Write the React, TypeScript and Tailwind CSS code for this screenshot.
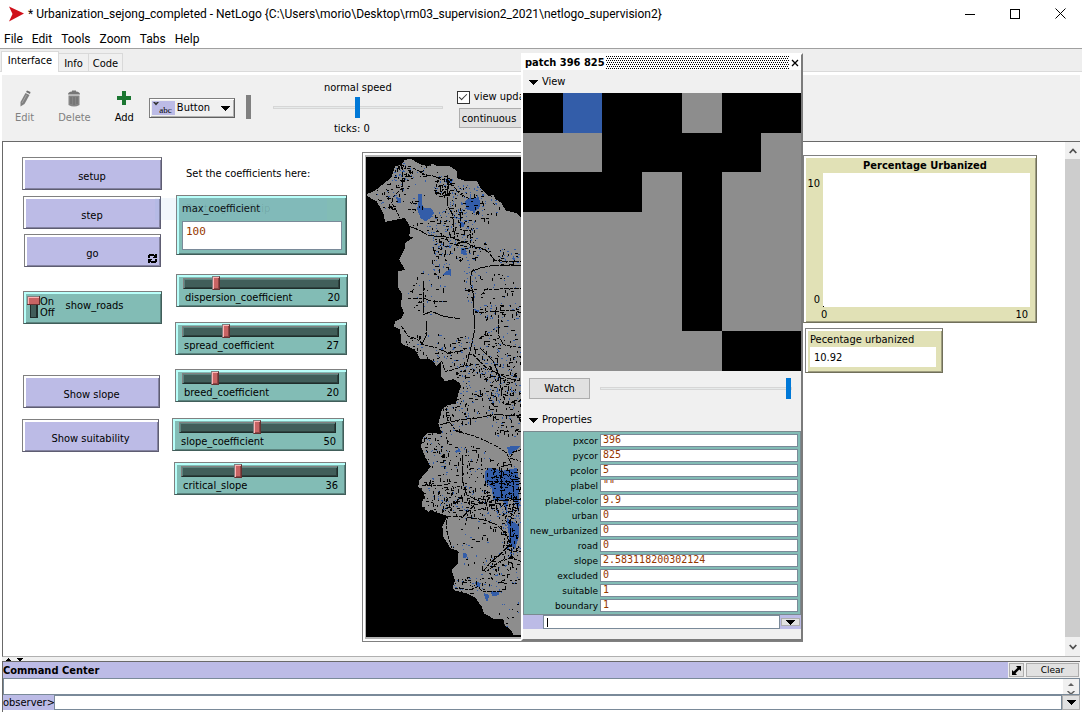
import React from "react";

const UI = "font-['DejaVu_Sans_Condensed','DejaVu_Sans',sans-serif]";

/* ---------- Bevelled widget frames ---------- */
const LILAC =
  "border border-t-[#808080] border-l-[#808080] border-r-[#5e5d72] border-b-[#5e5d72] bg-[#bcbbe6] shadow-[inset_2px_2px_0_#ffffff,inset_-1px_-1px_0_#8483a1]";
const TEAL =
  "border border-t-[#808080] border-l-[#808080] border-r-[#415e5a] border-b-[#415e5a] bg-[#82bcb5] shadow-[inset_2px_2px_0_#b9fffa,inset_-1px_-1px_0_#5b847f]";
const SAND =
  "border border-t-[#808080] border-l-[#808080] border-r-[#706f5a] border-b-[#706f5a] bg-[#e1e1b6] shadow-[inset_2px_2px_0_#ffffff,inset_-1px_-1px_0_#9e9d7f]";

function CanvasButton({ label, place, forever }: { label: string; place: string; forever?: boolean }) {
  return (
    <button className={`absolute h-[33px] pt-[7px] text-center text-[11px] ${LILAC} ${place}`}>
      {label}
      {forever && (
        <svg className="absolute right-[3px] bottom-[3px]" width="9" height="9" viewBox="0 0 9 9" shapeRendering="crispEdges" aria-hidden="true">
          <path d="M0 4V1h1V0h5v1h1V0h2v4H5V3h1V2H2v2zM9 5v3H8v1H3V8H2v1H0V5h4v1H3v1h4V5z" fill="#000" />
        </svg>
      )}
    </button>
  );
}

function CoefficientSlider({ name, value, place }: { name: string; value: number; place: string }) {
  return (
    <div className={`absolute h-[33px] w-[172px] pr-[7px] pl-[6px] ${TEAL} ${place}`}>
      <input
        id={name}
        type="range"
        min={1}
        max={100}
        defaultValue={value}
        className="mt-px block h-[14px] w-full appearance-none bg-transparent [&::-webkit-slider-runnable-track]:h-[11px] [&::-webkit-slider-runnable-track]:border [&::-webkit-slider-runnable-track]:border-t-[#808080] [&::-webkit-slider-runnable-track]:border-l-[#808080] [&::-webkit-slider-runnable-track]:border-r-[#1f2d2b] [&::-webkit-slider-runnable-track]:border-b-[#1f2d2b] [&::-webkit-slider-runnable-track]:bg-[#415e5a] [&::-webkit-slider-runnable-track]:shadow-[inset_1px_1px_0_#5b847f,inset_-1px_-1px_0_#2d413e] [&::-webkit-slider-thumb]:-mt-[3px] [&::-webkit-slider-thumb]:h-[14px] [&::-webkit-slider-thumb]:w-[8px] [&::-webkit-slider-thumb]:appearance-none [&::-webkit-slider-thumb]:border [&::-webkit-slider-thumb]:border-t-[#808080] [&::-webkit-slider-thumb]:border-l-[#808080] [&::-webkit-slider-thumb]:border-r-[#643232] [&::-webkit-slider-thumb]:border-b-[#643232] [&::-webkit-slider-thumb]:bg-[#c86464] [&::-webkit-slider-thumb]:shadow-[inset_1px_1px_0_#ffb4b4,inset_-1px_-1px_0_#8c4646]"
      />
      <div className="flex justify-between pt-px pl-0.5 text-[11px] leading-[14px]">
        <label htmlFor={name}>{name}</label>
        <span>{value}</span>
      </div>
    </div>
  );
}

/* ---------- World view ---------- */
const LAND =
  "22,138 45,128 80,100 93,90 105,55 125,50 135,35 155,33 165,40 185,50 205,55 215,47 235,55 270,55 290,68 290,90 320,100 352,100 362,120 380,140 400,140 405,152 425,165 437,188 470,195 483,208 483,1461 460,1461 455,1448 433,1431 430,1414 400,1412 372,1396 365,1376 345,1348 320,1336 285,1328 278,1318 285,1296 275,1266 293,1246 293,1208 272,1201 250,1166 247,1136 262,1104 215,1088 205,1091 185,1076 185,1061 195,1048 190,1031 175,1016 178,996 200,971 212,956 195,926 183,896 188,871 205,854 245,858 235,826 245,786 262,771 287,768 295,736 303,715 300,705 280,693 255,700 243,685 243,640 230,655 215,635 180,632 165,605 125,588 120,545 102,535 105,520 125,510 132,495 122,470 127,440 113,415 115,370 135,365 118,335 135,300 135,285 160,268 148,265 150,235 135,210 110,215 75,222 70,195 50,160 22,145";

const ROADS = [
  "145,234 175,245 205,262 240,266 275,268 290,275 320,285 345,297 375,305 390,318 405,338 483,342",
  "160,60 175,68 195,80 225,85 245,95 265,98 285,120 300,138 325,150",
  "128,58 128,120 100,145 95,165 110,190 120,210",
  "262,80 262,170 278,200 283,262",
  "300,180 300,245 330,248 330,300",
  "250,262 270,285 290,292 320,295",
  "483,352 400,352 360,360 335,370 330,400 340,440 342,500 345,540 335,590 320,650",
  "365,440 375,425 483,420",
  "345,495 400,490 483,485",
  "190,400 190,500 215,490 250,505 300,512",
  "145,452 190,450 215,460 260,460",
  "125,535 145,565 170,572 190,590 230,600 265,615 300,610 320,600",
  "200,520 200,560 185,590",
  "245,640 255,670 280,665 305,655 340,650",
  "415,500 415,560 430,590 483,600",
  "360,600 400,640 420,690 425,740",
  "340,620 380,660 440,690 483,700",
  "258,780 262,815 290,850 330,860 370,875 410,895 440,915 450,940 455,960",
  "240,830 300,815 350,810 400,800 483,803",
  "483,905 460,912 450,930 483,940",
  "265,1104 310,1104 345,1070 400,1058 483,1055",
  "308,920 308,1000 320,1040 360,1060",
  "188,1013 250,1011",
  "262,1104 258,1140 275,1200",
  "320,1108 370,1115 410,1130 440,1160 450,1190 420,1220 390,1245 370,1270",
  "285,1320 330,1325 355,1315 365,1330 430,1332",
  "380,1270 420,1240 455,1230 483,1240",
  "425,960 425,1050",
  "440,980 460,1000 460,1070 450,1130 455,1220",
  "390,1000 483,1000",
];

const LAKES = [
  "175,138 185,138 188,178 215,182 222,195 210,212 195,220 182,210 172,185",
  "108,146 125,152 122,165 112,165",
  "325,150 358,148 360,175 345,192 320,185 315,165",
  "302,300 318,302 318,322 303,318",
  "262,368 273,362 272,383 250,380",
  "255,92 280,92 275,106 260,106",
  "300,220 315,225 312,238 300,235",
  "343,484 357,486 355,495 345,495",
  "440,896 483,894 460,912 448,922",
  "375,970 390,960 430,968 470,960 478,1000 478,1100 465,1060 445,1050 440,1100 430,1060 400,1055 395,1020 375,1000",
  "440,1110 475,1130 478,1160 465,1205 450,1190 445,1150",
  "370,1335 386,1340 385,1360 378,1358",
  "393,1330 418,1332 415,1342 396,1344",
  "308,1215 322,1217 320,1228 310,1230",
  "345,1302 362,1304 360,1318 348,1316",
  "285,908 300,904 302,912 288,914",
];

/* cx, cy, rx, ry, strokes of road, urban cells */
const CLUSTERS = [
  [125, 85, 30, 45, 36, 26],
  [90, 145, 45, 40, 32, 12],
  [180, 75, 60, 30, 24, 12],
  [250, 115, 30, 35, 60, 16],
  [320, 165, 55, 60, 36, 80],
  [275, 240, 75, 60, 80, 70],
  [380, 180, 50, 40, 18, 12],
  [165, 175, 30, 70, 16, 6],
  [300, 300, 90, 40, 48, 45],
  [440, 325, 50, 25, 20, 22],
  [240, 340, 30, 50, 20, 22],
  [330, 400, 20, 70, 16, 22],
  [200, 430, 55, 70, 26, 14],
  [400, 420, 70, 50, 22, 10],
  [420, 490, 75, 30, 36, 28],
  [200, 600, 75, 50, 40, 22],
  [310, 620, 50, 60, 38, 30],
  [420, 620, 80, 90, 110, 55],
  [380, 700, 100, 60, 80, 60],
  [280, 810, 50, 60, 46, 18],
  [440, 790, 60, 80, 90, 40],
  [350, 770, 60, 60, 26, 18],
  [225, 900, 45, 60, 50, 20],
  [320, 950, 80, 60, 60, 24],
  [235, 1040, 60, 60, 80, 22],
  [320, 1060, 80, 50, 100, 30],
  [430, 1020, 60, 80, 190, 60],
  [455, 1140, 35, 90, 95, 70],
  [370, 1130, 80, 60, 26, 18],
  [310, 1220, 40, 40, 12, 10],
  [420, 1270, 60, 60, 65, 28],
  [330, 1310, 50, 25, 26, 14],
  [440, 1380, 40, 60, 10, 6],
];

function scatter(which: 4 | 5, seed: number) {
  let s = seed;
  const next = () => {
    s = (s * 1664525 + 1013904223) % 4294967296;
    return s / 4294967296;
  };
  let d = "";
  for (const c of CLUSTERS) {
    for (let i = 0; i < c[which]; i++) {
      const angle = next() * Math.PI * 2;
      const r = Math.sqrt(next());
      const x = Math.round((c[0] + Math.cos(angle) * r * c[2]) / 3) * 3;
      const y = Math.round((c[1] + Math.sin(angle) * r * c[3]) / 3) * 3;
      const len = which === 4 ? 3 * (1 + Math.floor(next() * 3.2)) : 3 * (1 + Math.floor(next() * 1.6));
      const flat = next() > 0.5;
      d += `M${x} ${y}h${flat ? len : 3}v${flat ? 3 : len}h${flat ? -len : -3}z`;
    }
  }
  return d;
}

const ROAD_CELLS = scatter(4, 20);
const URBAN_CELLS = scatter(5, 77);

function WorldMap() {
  return (
    <svg width="155" height="480" viewBox="18 27 465 1440" shapeRendering="crispEdges" role="img" aria-label="World view" className="block">
      <rect x="18" y="27" width="465" height="1440" fill="#000" />
      <clipPath id="land">
        <polygon points={LAND} />
      </clipPath>
      <polygon points={LAND} fill="#8d8d8d" />
      <g clipPath="url(#land)">
        {LAKES.map((p) => (
          <polygon key={p} points={p} fill="#335da9" />
        ))}
        <path d={URBAN_CELLS} fill="#335da9" />
        <path d={ROAD_CELLS} fill="#000" />
        {ROADS.map((p, i) => (
          <polyline key={p} points={p} fill="none" stroke="#000" strokeWidth="3" strokeDasharray={i % 3 === 0 ? "30 3" : "9 4 15 3"} />
        ))}
      </g>
    </svg>
  );
}

const PATCHES = ["KBKKGKK", "GGKKKKG", "KKKGKGG", "GGGGKGG", "GGGGKGG", "GGGGKGG", "GGGGGKK"];
const PATCH_FILL: Record<string, string> = { K: "#000000", B: "#335da9", G: "#8d8d8d" };

function PatchView() {
  return (
    <svg viewBox="0 0 7 7" className="block aspect-square w-full" shapeRendering="crispEdges" role="img" aria-label="Patch view">
      {PATCHES.map((row, y) =>
        row.split("").map((c, x) => <rect key={`${x}-${y}`} x={x} y={y} width="1" height="1" fill={PATCH_FILL[c]} />)
      )}
    </svg>
  );
}

/* ---------- Patch inspector ---------- */
const PROPERTIES = [
  ["pxcor", "396"],
  ["pycor", "825"],
  ["pcolor", "5"],
  ["plabel", '""'],
  ["plabel-color", "9.9"],
  ["urban", "0"],
  ["new_urbanized", "0"],
  ["road", "0"],
  ["slope", "2.583118200302124"],
  ["excluded", "0"],
  ["suitable", "1"],
  ["boundary", "1"],
];

const BLUE_RANGE =
  "h-[21px] appearance-none bg-transparent [&::-webkit-slider-runnable-track]:h-[3px] [&::-webkit-slider-runnable-track]:border [&::-webkit-slider-runnable-track]:border-[#d6d6d6] [&::-webkit-slider-runnable-track]:bg-[#e7eaea] [&::-webkit-slider-thumb]:-mt-[10px] [&::-webkit-slider-thumb]:h-[21px] [&::-webkit-slider-thumb]:w-[5px] [&::-webkit-slider-thumb]:appearance-none [&::-webkit-slider-thumb]:bg-[#0078d7]";

function Down({ className = "" }: { className?: string }) {
  return (
    <svg width="9" height="5" viewBox="0 0 9 5" className={className} shapeRendering="crispEdges" aria-hidden="true">
      <path d="M0 0h9v1H8v1H7v1H6v1H5v1H4V4H3V3H2V2H1V1H0z" fill="#000" />
    </svg>
  );
}

function Inspector() {
  return (
    <section className="absolute top-[53px] left-[521px] flex h-[588px] w-[282px] flex-col border-t-2 border-r-2 border-b-2 border-l-2 border-t-white border-r-[#7b7b7b] border-b-[#7b7b7b] border-l-white bg-[#f0f0f0]">
      <header className="flex h-[15px] shrink-0 items-center bg-white pl-0.5">
        <h2 className="text-[11px] leading-[14px] font-bold">patch 396 825</h2>
        <svg className="ml-px h-[13px] min-w-0 flex-1" shapeRendering="crispEdges" aria-hidden="true">
          <pattern id="grip" width="4" height="4" patternUnits="userSpaceOnUse">
            <path d="M0 0h1v1H0zM2 0h1v1H2zM1 2h1v1H1zM3 2h1v1H3z" fill="#000" />
          </pattern>
          <rect width="100%" height="100%" fill="url(#grip)" />
        </svg>
        <button aria-label="Close" className="flex h-[13px] w-3 items-center justify-center bg-white">
          <svg width="8" height="8" viewBox="0 0 8 8" aria-hidden="true">
            <path d="M1 1l6 6M7 1L1 7" stroke="#000" strokeWidth="1.3" />
          </svg>
        </button>
      </header>
      <button className="flex h-[23px] shrink-0 items-center gap-1 pt-0.5 pl-[6px] text-[11px]">
        <Down />
        View
      </button>
      <PatchView />
      <div className="flex h-[35px] shrink-0 items-center gap-[10px] pr-[9px] pl-[6px]">
        <button className="h-[21px] w-[61px] border border-[#adadad] bg-[#e1e1e1] text-[11px] leading-none">Watch</button>
        <input type="range" aria-label="Zoom" defaultValue={100} className={`min-w-0 flex-1 ${BLUE_RANGE}`} />
      </div>
      <button className="flex h-[25px] shrink-0 items-center gap-1 pt-[3px] pl-[6px] text-[11px]">
        <Down />
        Properties
      </button>
      <div className="flex shrink-0 flex-col gap-0.5 border border-[#7a8a8f] bg-[#82bcb5] py-0.5 pr-0.5">
        {PROPERTIES.map(([name, value]) => (
          <div key={name} className="flex h-[13px] items-center gap-0.5">
            <label htmlFor={`p-${name}`} className="w-[74px] pt-0.5 text-right font-['DejaVu_Sans',sans-serif] text-[9px] leading-[13px] whitespace-nowrap">
              {name}
            </label>
            <input
              id={`p-${name}`}
              defaultValue={value}
              className="h-[13px] min-w-0 flex-1 border border-[#7a8a99] bg-white px-0.5 pb-0.5 font-['DejaVu_Sans_Mono',monospace] text-[10px] leading-[10px] text-[#963700]"
            />
          </div>
        ))}
      </div>
      <div className="flex h-[14px] shrink-0 items-stretch bg-[#bcbbe6] pl-5">
        <div className="flex min-w-0 flex-1 items-center border border-[#7a8a99] bg-white pl-[3px]">
          <span className="h-[9px] w-px bg-black" />
          <input aria-label="Patch command" className="h-3 min-w-0 flex-1 text-[10px] outline-none" />
        </div>
        <button aria-label="Command history" className="mx-px my-[3px] flex w-[19px] items-center justify-center border border-[#adadad] bg-[#e1e1e1]">
          <Down />
        </button>
      </div>
    </section>
  );
}

/* ---------- Page ---------- */
const TOOL = "flex flex-col items-center gap-1 text-[11px] leading-[14px]";

export default function App() {
  return (
    <div className={`relative flex h-screen flex-col overflow-hidden bg-white text-[11px] text-black ${UI}`}>
      <header className="flex h-[27px] shrink-0 items-center font-['Roboto','Open_Sans',sans-serif]">
        <svg width="16" height="16" viewBox="0 0 16 16" className="mr-1 ml-2" aria-hidden="true">
          <path d="M1 0.5L16 7.5 1 15.5 4.5 8z" fill="#d0101a" />
        </svg>
        <h1 className="flex-1 text-[12px] whitespace-nowrap">
          * Urbanization_sejong_completed - NetLogo {"{C:\\Users\\morio\\Desktop\\rm03_supervision2_2021\\netlogo_supervision2}"}
        </h1>
        <div className="flex gap-[35px] pr-4">
          <button aria-label="Minimize">
            <svg width="10" height="10" viewBox="0 0 10 10" shapeRendering="crispEdges">
              <path d="M0 5h10v1H0z" />
            </svg>
          </button>
          <button aria-label="Maximize">
            <svg width="10" height="10" viewBox="0 0 10 10" shapeRendering="crispEdges">
              <path d="M.5.5h9v9h-9z" fill="none" stroke="#000" />
            </svg>
          </button>
          <button aria-label="Close window">
            <svg width="11" height="11" viewBox="0 0 11 11">
              <path d="M.5.5l10 10M10.5.5l-10 10" stroke="#000" />
            </svg>
          </button>
        </div>
      </header>
      <nav className="flex h-[22px] shrink-0 items-center gap-[9px] border-b border-[#a0a0a0] pt-0.5 pl-1 font-['Roboto','Open_Sans',sans-serif] text-[12px]">
        {["File", "Edit", "Tools", "Zoom", "Tabs", "Help"].map((m) => (
          <button key={m}>{m}</button>
        ))}
      </nav>

      <div className="flex h-[23px] shrink-0 items-end border-b border-[#dadada] bg-[#eeeeee] pl-px">
        <button className="-mb-px h-[21px] w-[58px] border border-b-0 border-[#dadada] bg-white pb-px text-[11px]">Interface</button>
        <button className="h-[18px] w-[30px] border-t border-r border-[#d9d9d9] bg-[#f0f0f0] pt-0.5 text-[11px]">Info</button>
        <button className="h-[18px] w-[34px] border-t border-r border-[#d9d9d9] bg-[#f0f0f0] pt-0.5 text-[11px]">Code</button>
      </div>

      <div className="mr-[2px] flex min-h-0 flex-1 flex-col border-l-2 border-l-white pt-[3px]">
        <div className="flex h-[67px] shrink-0 items-start border-b border-[#696969] bg-[#f0f0f0]">
          <div className="flex shrink-0 gap-6 pt-[15px] pl-[13px]">
            <button className={`${TOOL} text-[#808080]`}>
              <svg width="12" height="17" viewBox="0 0 12 17" aria-hidden="true">
                <path d="M6.5 3L10.5 5 5.5 14 1.5 16.5 1.5 12z" fill="#808080" />
                <path d="M7 2L8 0.5 11.5 2 11 4z" fill="#6d6d6d" />
                <path d="M7.5 5L3 13" stroke="#a5a5a5" />
              </svg>
              Edit
            </button>
            <button className={`${TOOL} text-[#808080]`}>
              <svg width="12" height="17" viewBox="0 0 12 17" aria-hidden="true">
                <path d="M0 4.5Q0 2 4 1.6V.5h4v1.1Q12 2 12 4.500z" fill="#777" />
                <path d="M.5 5.500h11V15q-5.500 3-11 0z" fill="#858585" />
                <path d="M3 7v7M6 7v8M9 7v7" stroke="#6a6a6a" />
              </svg>
              Delete
            </button>
            <button className={TOOL}>
              <svg width="14" height="17" viewBox="0 0 14 17" aria-hidden="true" shapeRendering="crispEdges">
                <path d="M5 1h4v5h5v4H9v5H5v-5H0V6h5z" fill="#1b7631" />
              </svg>
              Add
            </button>
          </div>
          <button className="mt-[23px] ml-[15px] flex h-5 w-[86px] shrink-0 items-center border border-t-[#808080] border-l-[#808080] border-r-[#606060] border-b-[#606060] bg-[#f0f0f0] pl-[2px] shadow-[inset_1px_1px_0_#fff,inset_-1px_-1px_0_#b0b0b0]">
            <span className="relative flex h-[14px] w-[23px] items-end justify-end bg-[#bcbbe6] pr-[3px] font-['Liberation_Serif',serif] text-[9px] leading-[10px]">
              <svg className="absolute top-0 left-px" width="6" height="5" viewBox="0 0 6 5" aria-hidden="true">
                <path d="M0 1h2l1 1 1-1h2L3 4.500z" fill="#333" />
              </svg>
              abc
            </span>
            <span className="flex-1 pl-0.5 text-left text-[11px]">Button</span>
            <Down className="mr-1" />
          </button>
          <div className="mt-5 ml-[11px] h-6 w-[5px] shrink-0 bg-[#808080]" />
          <div className="ml-[22px] flex w-[170px] shrink-0 flex-col items-center pt-[6px] text-[11px] leading-[14px]">
            <label htmlFor="speed">normal speed</label>
            <input id="speed" type="range" className={`my-0.5 w-full ${BLUE_RANGE}`} />
            <span className="pt-0.5 pr-3">ticks: 0</span>
          </div>
          <div className="ml-[14px] shrink-0 pt-[15px]">
            <label className="flex items-center gap-1 text-[11px] leading-[14px] whitespace-nowrap">
              <input
                type="checkbox"
                defaultChecked
                className="h-[13px] w-[13px] appearance-none border border-[#333] bg-white after:block after:h-[4px] after:w-[8px] after:translate-x-[1px] after:translate-y-[2px] after:-rotate-45 after:border-b after:border-l after:border-[#333]"
              />
              view updates
            </label>
            <select
              aria-label="Update mode"
              className="mt-1 ml-0.5 h-5 w-[96px] appearance-none border border-[#adadad] bg-[#e1e1e1] px-0.5 pt-0.5 text-[11px]"
            >
              <option>continuous</option>
            </select>
          </div>
        </div>

        <div className="flex min-h-0 flex-1 border-b border-l border-b-[#b0b0b0] border-l-[#696969]">
          <main className="relative min-w-0 flex-1 overflow-hidden">
            <CanvasButton label="setup" place="left-[19px] top-[15px] w-[140px]" />
            <CanvasButton label="step" place="left-[20px] top-[54px] w-[138px]" />
            <CanvasButton label="go" place="left-[21px] top-[92px] w-[137px]" forever />
            <CanvasButton label="Show slope" place="left-[20px] top-[233px] w-[137px]" />
            <CanvasButton label="Show suitability" place="left-[19px] top-[277px] w-[137px]" />

            <button role="switch" aria-checked="true" className={`absolute top-[149px] left-[20px] flex h-[33px] w-[139px] items-start pl-[3px] ${TEAL}`}>
              <svg width="13" height="24" viewBox="0 0 13 24" className="mt-1" shapeRendering="crispEdges" aria-hidden="true">
                <path d="M3 9h8v13H3z" fill="#1f2d2b" />
                <path d="M4 9h5v12H4z" fill="#415e5a" />
                <path d="M0 0h13v9H0z" fill="#643232" />
                <path d="M0 0h12v1H1v7H0z" fill="#808080" />
                <path d="M1 1h11v7H1z" fill="#c86464" />
                <path d="M1 1h11v1H2v6H1z" fill="#ffb4b4" />
              </svg>
              <span className="mt-1 flex flex-col text-left leading-[11px]">
                <span>On</span>
                <span>Off</span>
              </span>
              <span className="mt-[7px] ml-[11px] leading-[14px]">show_roads</span>
            </button>

            <p className="absolute top-[25px] left-[183px] leading-[14px]">Set the coefficients here:</p>

            <div className={`absolute top-[53px] left-[173px] flex h-[60px] w-[171px] flex-col px-[5px] pt-[6px] ${TEAL}`}>
              <label htmlFor="maxc" className="leading-[14px]">
                max_coefficient
              </label>
              <textarea
                id="maxc"
                defaultValue="100"
                className="mt-[5px] block h-[29px] w-[160px] resize-none overflow-hidden border border-[#7a8a99] bg-white px-[3px] pt-[3px] font-['DejaVu_Sans_Mono',monospace] text-[11px] leading-[14px] text-[#963700]"
              />
            </div>
            <div className="pointer-events-none absolute top-[56px] left-[152px] h-[22px] w-[172px] bg-[#7db4e6]/10 pl-[31px] text-[11px] leading-[22px] text-black/10" aria-hidden="true">
              Rectangular Snip
            </div>

            <CoefficientSlider name="dispersion_coefficient" value={20} place="left-[173px] top-[132px]" />
            <CoefficientSlider name="spread_coefficient" value={27} place="left-[172px] top-[180px]" />
            <CoefficientSlider name="breed_coefficient" value={20} place="left-[172px] top-[227px]" />
            <CoefficientSlider name="slope_coefficient" value={50} place="left-[169px] top-[276px]" />
            <CoefficientSlider name="critical_slope" value={36} place="left-[171px] top-[320px]" />

            <div className="absolute top-[10px] left-[359px] w-[441px] border border-[#808080] bg-white p-0.5">
              <div className="border-2 border-r-0 border-l border-[#b4b4b4]">
                <WorldMap />
              </div>
            </div>

            <figure className={`absolute top-[13px] left-[800px] flex h-[168px] w-[234px] flex-col pr-[6px] ${SAND}`}>
              <figcaption className="h-[17px] pt-[3px] pl-4 text-center text-[11px] leading-[14px] font-bold">Percentage Urbanized</figcaption>
              <div className="flex h-[134px]">
                <div className="flex w-[19px] flex-col justify-between pt-1 pr-[3px] text-right leading-[14px]">
                  <span>10</span>
                  <span>0</span>
                </div>
                <div className="flex flex-1 items-end bg-white">
                  <span className="h-px w-px bg-black" />
                </div>
              </div>
              <div className="flex justify-between pt-px pr-[2px] pl-[17px] leading-[14px]">
                <span>0</span>
                <span>10</span>
              </div>
            </figure>

            <div className={`absolute top-[186px] left-[802px] h-[45px] w-[138px] pt-[3px] pr-[6px] pl-[4px] ${SAND}`}>
              <div className="leading-[15px]">Pecentage urbanized</div>
              <output className="block h-5 bg-white pl-1 leading-[21px]">10.92</output>
            </div>
          </main>
          <div className="flex w-[15px] shrink-0 flex-col bg-[#cdcdcd]">
            <button aria-label="Scroll up" className="flex h-[17px] items-center justify-center bg-[#f0f0f0]">
              <svg width="8" height="6" viewBox="0 0 8 6">
                <path d="M.7 5L4 1.500 7.300 5" fill="none" stroke="#505050" strokeWidth="1.800" />
              </svg>
            </button>
            <div className="flex-1" />
            <button aria-label="Scroll down" className="flex h-[19px] items-center justify-center bg-[#f0f0f0]">
              <svg width="8" height="6" viewBox="0 0 8 6">
                <path d="M.7 1L4 4.500 7.300 1" fill="none" stroke="#505050" strokeWidth="1.800" />
              </svg>
            </button>
          </div>
        </div>

        <div className="flex h-[5px] shrink-0 items-end gap-[5px] border-b border-[#696969] bg-[#f0f0f0] pl-1">
          <svg width="18" height="4" viewBox="0 0 18 4" shapeRendering="crispEdges" aria-hidden="true">
            <path d="M2 1h1v1h1v1h1v1H0V3h1V2h1zM11 1h6v1h-1v1h-1v1h-2V3h-1V2h-1z" fill="#000" />
          </svg>
        </div>

        <section className="shrink-0 border-l border-[#696969] pb-[2px]">
          <div className="flex h-[16px] items-stretch bg-[#bcbbe6]">
            <h2 className="flex-1 text-[11px] leading-[17px] font-bold">Command Center</h2>
            <div className="flex items-center gap-0.5 bg-[#f0f0f0] pr-px pl-px">
              <button aria-label="Detach command center" className="flex h-[14px] w-[15px] items-center justify-center border border-[#adadad] bg-[#e1e1e1]">
                <svg width="9" height="9" viewBox="0 0 9 9" aria-hidden="true">
                  <path d="M4 0h5v5L7.300 3.500 3.500 7.300 5 9H0V4l1.700 1.500L5.500 1.700z" fill="#000" />
                </svg>
              </button>
              <button className="h-[14px] w-[53px] border border-[#adadad] bg-[#e1e1e1] font-['DejaVu_Sans',sans-serif] text-[9px] leading-[10px]">Clear</button>
            </div>
          </div>
          <div className="flex h-[17px] border border-[#7a8a99]">
            <div className="flex-1 bg-white" />
            <div className="flex w-[16px] flex-col items-center justify-between bg-[#f0f0f0] pt-1">
              <svg width="6" height="3" viewBox="0 0 6 3" aria-hidden="true">
                <path d="M0 3l3-3 3 3z" fill="#606060" />
              </svg>
              <svg width="8" height="3" viewBox="0 0 8 3" aria-hidden="true">
                <path d="M.5 0L4 3 7.500 0" fill="none" stroke="#606060" strokeWidth="1.500" />
              </svg>
            </div>
          </div>
          <div className="flex h-[15px] items-stretch bg-[#bcbbe6]">
            <label htmlFor="observer" className="w-[51px] text-[11px] leading-[15px] whitespace-nowrap">
              observer&gt;
            </label>
            <input id="observer" className="min-w-0 flex-1 border border-[#7a8a99] bg-white px-1 text-[11px] outline-none" />
            <button aria-label="History" className="flex w-[18px] items-center justify-center border border-[#adadad] bg-[#e1e1e1]">
              <Down />
            </button>
          </div>
        </section>
      </div>

      <Inspector />
    </div>
  );
}
